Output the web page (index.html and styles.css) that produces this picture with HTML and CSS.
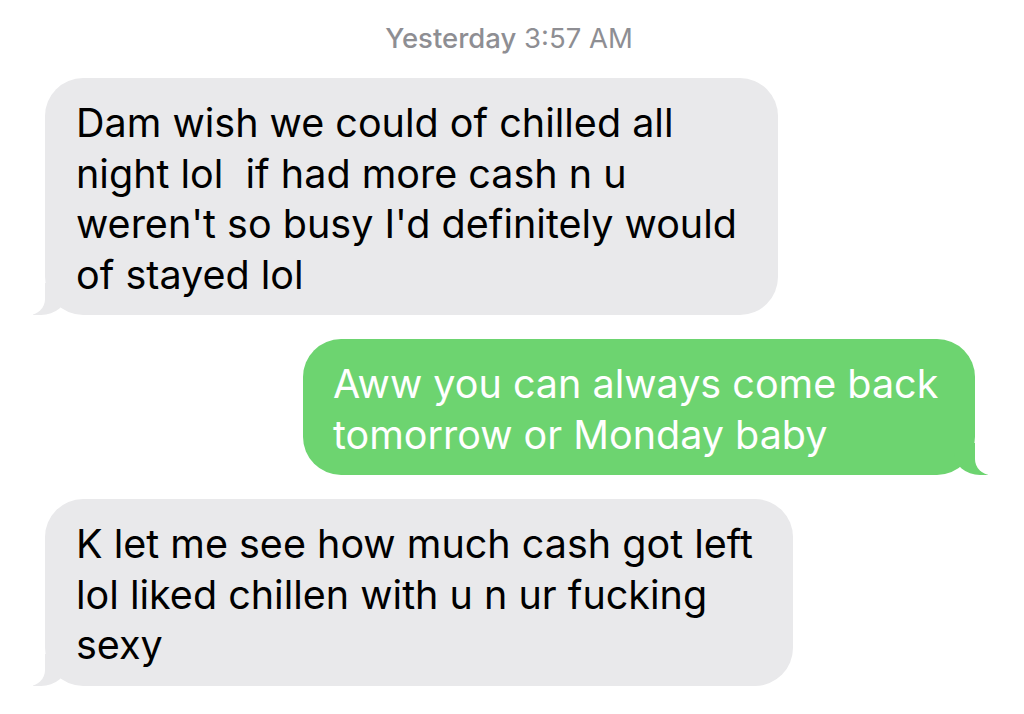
FILE: index.html
```html
<!DOCTYPE html>
<html lang="en">
<head>
    <meta charset="UTF-8">
    <meta name="viewport" content="width=device-width, initial-scale=1.0">
    <title>Messages</title>
    <link rel="stylesheet" href="styles.css">
</head>
<body>
    <div class="thread">
        <div class="stamp"><b>Yesterday</b> 3:57 AM</div>

        <div class="bubble them first">
            Dam wish we could of chilled all<br>
            night lol&nbsp; if had more cash n u<br>
            weren't so busy I'd definitely would<br>
            of stayed lol
        </div>

        <div class="bubble me second">
            Aww you can always come back<br>
            tomorrow or Monday baby
        </div>

        <div class="bubble them third">
            K let me see how much cash got left<br>
            lol liked chillen with u n ur fucking<br>
            sexy
        </div>
    </div>
</body>
</html>
```

FILE: styles.css
```css
body {
    margin: 0;
    background-color: #fff;
    font-family: Inter, "Noto Sans", sans-serif;
}
.thread {
    display: flex;
    flex-direction: column;
    gap: 24px;
    padding: 23px 49px 0 45px;
}
.stamp {
    text-align: center;
    color: #8e8e93;
    font-size: 27.5px;
    line-height: 30px;
    margin-bottom: 1px;
    padding-right: 2px;
}
.stamp b {
    font-weight: 500;
}
.bubble {
    position: relative;
    box-sizing: border-box;
    font-size: 39.5px;
    line-height: 50.5px;
    padding: 20px 20px 15px 31px;
    border-radius: 38px;
    white-space: nowrap;
}
.bubble.them {
    align-self: flex-start;
    background-color: #e9e9eb;
    color: #000;
}
.bubble.me {
    align-self: flex-end;
    background-color: #6dd470;
    color: #fff;
    padding-left: 30px;
}
.first { width: 733px; }
.second { width: 672px; }
.third { width: 748px; }

/* tails */
.bubble::before,
.bubble::after {
    content: "";
    position: absolute;
    bottom: 0;
    height: 32px;
}
.them::before {
    left: -12px;
    width: 34px;
    background-color: #e9e9eb;
    border-bottom-right-radius: 26px 22px;
}
.them::after {
    left: -40px;
    width: 40px;
    background-color: #fff;
    border-bottom-right-radius: 16px;
}
.me::before {
    right: -13px;
    width: 34px;
    background-color: #6dd470;
    border-bottom-left-radius: 26px 22px;
}
.me::after {
    right: -40px;
    width: 40px;
    background-color: #fff;
    border-bottom-left-radius: 16px;
}
```
